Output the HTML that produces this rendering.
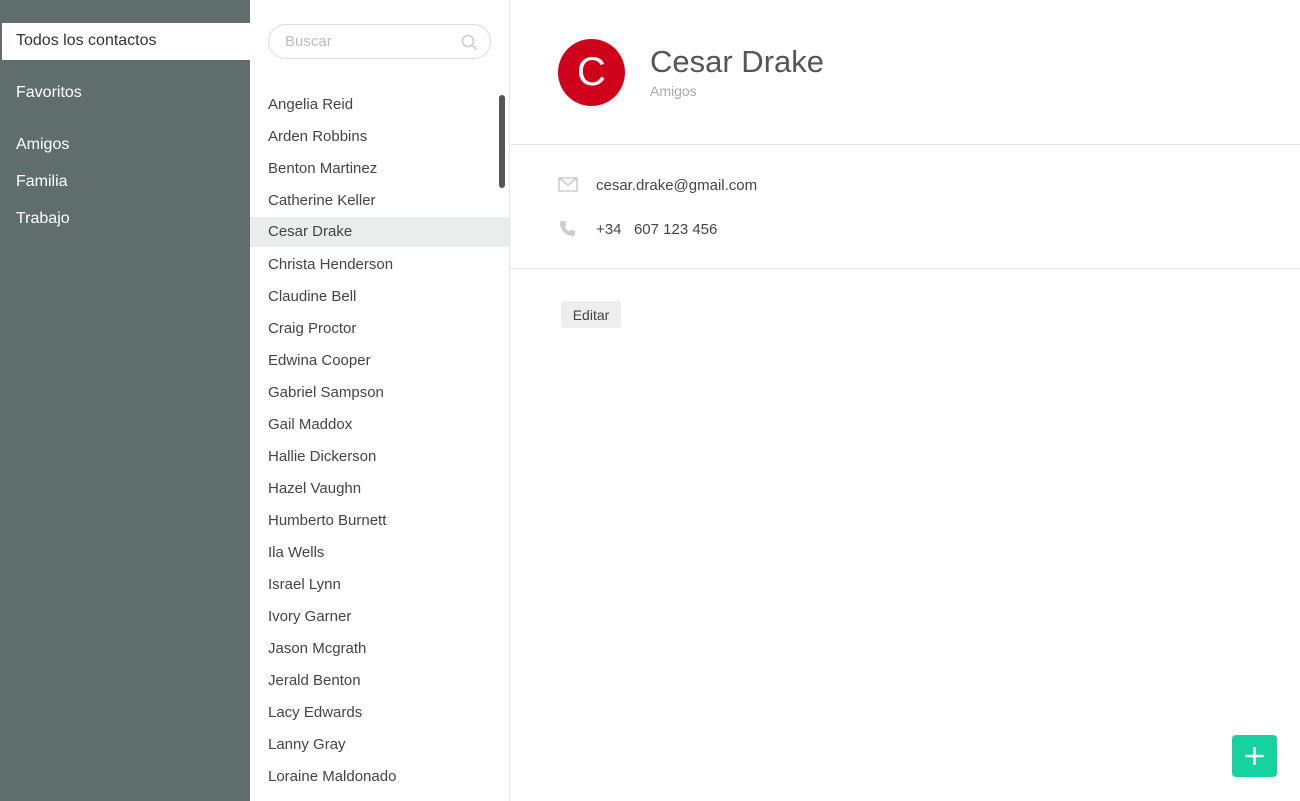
<!DOCTYPE html>
<html><head><meta charset="utf-8"><style>
*{margin:0;padding:0;box-sizing:border-box}
body{width:1300px;height:801px;overflow:hidden;font-family:"Liberation Sans",sans-serif;background:#fff;position:relative;color:#444}
#side{position:absolute;left:0;top:0;width:250px;height:801px;background:#5f6e6a}
#side div{position:absolute;left:0;width:250px;padding-left:16px;color:#fff;font-size:16px;line-height:37px}
#side .sel{background:#fff;color:#333;top:23px;height:37px;left:2px;padding-left:14px}
#list{position:absolute;left:250px;top:0;width:260px;height:801px;border-right:1px solid #e4e4e4}
.search{position:absolute;left:18px;top:24px;width:223px;height:35px;border:1px solid #ddd;border-radius:18px;color:#bbb;font-size:15px;line-height:33px;padding-left:16px}
.row{position:absolute;left:0;width:259px;height:30px;line-height:34px;padding-left:18px;font-size:15px;color:#444}
.row.on{background:#e9eeec}
.sb{position:absolute;left:249px;top:95px;width:6px;height:93px;background:#555;border-radius:3px}
#det{position:absolute;left:510px;top:0;right:0;height:801px}
.av{position:absolute;left:48px;top:39px;width:67px;height:67px;border-radius:50%;background:#d0021b;color:#fff;font-size:40px;text-align:center;line-height:67px}
.name{position:absolute;left:140px;top:44px;font-size:31px;color:#555}
.grp{position:absolute;left:140px;top:83px;font-size:14px;color:#aaa}
.hr{position:absolute;left:0;right:0;height:1px;background:#e4e4e4}
.t{position:absolute;left:86px;font-size:15px;color:#444}
.btn{position:absolute;left:51px;top:301px;width:60px;height:27px;background:#eee;border-radius:3px;font-size:14px;line-height:28px;text-align:center;color:#444}
.fab{position:absolute;left:1232px;top:735px;width:45px;height:42px;background:#14d3a0;border-radius:4px}
</style></head><body>
<div id="side">
<div class="sel" style="line-height:36px">Todos los contactos</div>
<div style="top:74px">Favoritos</div>
<div style="top:126px">Amigos</div>
<div style="top:163px">Familia</div>
<div style="top:200px">Trabajo</div>
</div>
<div id="list">
<div class="search">Buscar<svg style="position:absolute;right:12px;top:9px" width="17" height="17" viewBox="0 0 17 17"><circle cx="7" cy="7" r="5.5" fill="none" stroke="#ccc" stroke-width="1.6"/><path d="M11 11l4.5 4.5" stroke="#ccc" stroke-width="1.8"/></svg></div>
<div class="sb"></div>
<div class="row" style="top:88px">Angelia Reid</div>
<div class="row" style="top:120px">Arden Robbins</div>
<div class="row" style="top:152px">Benton Martinez</div>
<div class="row" style="top:184px">Catherine Keller</div>
<div class="row on" style="top:217px;line-height:30px">Cesar Drake</div>
<div class="row" style="top:248px">Christa Henderson</div>
<div class="row" style="top:280px">Claudine Bell</div>
<div class="row" style="top:312px">Craig Proctor</div>
<div class="row" style="top:344px">Edwina Cooper</div>
<div class="row" style="top:376px">Gabriel Sampson</div>
<div class="row" style="top:408px">Gail Maddox</div>
<div class="row" style="top:440px">Hallie Dickerson</div>
<div class="row" style="top:472px">Hazel Vaughn</div>
<div class="row" style="top:504px">Humberto Burnett</div>
<div class="row" style="top:536px">Ila Wells</div>
<div class="row" style="top:568px">Israel Lynn</div>
<div class="row" style="top:600px">Ivory Garner</div>
<div class="row" style="top:632px">Jason Mcgrath</div>
<div class="row" style="top:664px">Jerald Benton</div>
<div class="row" style="top:696px">Lacy Edwards</div>
<div class="row" style="top:728px">Lanny Gray</div>
<div class="row" style="top:760px">Loraine Maldonado</div>
</div>
<div id="det">
<div class="av">C</div>
<div class="name">Cesar Drake</div>
<div class="grp">Amigos</div>
<div class="hr" style="top:144px"></div>
<svg style="position:absolute;left:48px;top:177px" width="20" height="15" viewBox="0 0 20 15"><rect x="1" y="1" width="18" height="13" fill="none" stroke="#ccc" stroke-width="1.5"/><path d="M1 1l9 7 9-7" fill="none" stroke="#ccc" stroke-width="1.5"/></svg>
<div class="t" style="top:177px">cesar.drake@gmail.com</div>
<svg style="position:absolute;left:49px;top:220px" width="17" height="17" viewBox="0 0 17 17"><path d="M3 1l3 0 1.5 4-2 1.5c1 2.2 2.8 4 5 5l1.5-2 4 1.5v3c0 1-1 2-2 2C7 16 1 10 1 3c0-1 1-2 2-2z" fill="#ccc"/></svg>
<div class="t" style="top:221px">+34&nbsp;&nbsp;&nbsp;607 123 456</div>
<div class="hr" style="top:268px"></div>
<div class="btn">Editar</div>
</div>
<div class="fab"><svg width="45" height="42" viewBox="0 0 45 42"><path d="M22.5 12v18M13.5 21h18" stroke="#fff" stroke-width="2.5"/></svg></div>
</body></html>
